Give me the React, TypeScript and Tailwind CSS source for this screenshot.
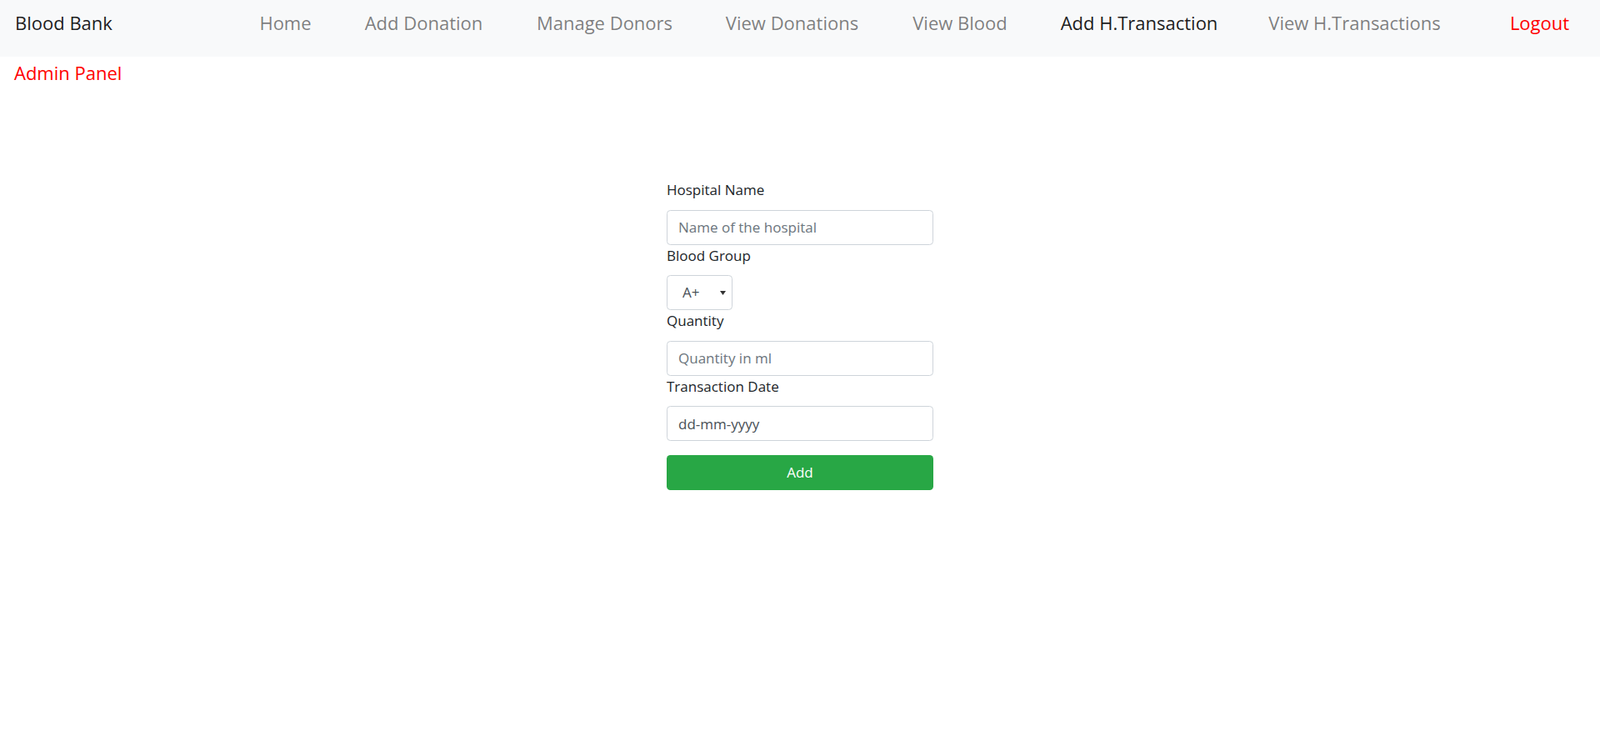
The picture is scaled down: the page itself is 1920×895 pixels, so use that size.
import React from "react";

const font = { fontFamily: '"Open Sans", "Noto Sans", "Liberation Sans", sans-serif' };

const links: { label: string; w: string; active?: boolean }[] = [
  { label: "Home", w: "w-[61px]" },
  { label: "Add Donation", w: "w-[143px]" },
  { label: "Manage Donors", w: "w-[163px]" },
  { label: "View Donations", w: "w-[159px]" },
  { label: "View Blood", w: "w-[116px]" },
  { label: "Add H.Transaction", w: "w-[186px]", active: true },
  { label: "View H.Transactions", w: "w-[203px]" },
];

function Label({ children }: { children: React.ReactNode }) {
  return (
    <label className="block text-[17px] leading-[26px] mb-[10.5px] text-[#212529]">{children}</label>
  );
}

export default function App() {
  return (
    <div className="min-h-[895px] bg-white" style={font}>
      <nav className="h-[68px] bg-[#f8f9fa] flex items-start pt-[10.5px] pl-[18px] pr-[37px]">
        <a className="text-[22px] leading-[32px] text-[rgba(0,0,0,0.9)] whitespace-nowrap w-[116px]">Blood Bank</a>
        <ul className="flex gap-[64px] ml-[178px]">
          {links.map((l) => (
            <li
              key={l.label}
              className={`${l.w} flex justify-center whitespace-nowrap text-[22px] leading-[32px] ${
                l.active ? "text-[rgba(0,0,0,0.9)]" : "text-[rgba(0,0,0,0.5)]"
              }`}
            >
              {l.label}
            </li>
          ))}
        </ul>
        <a className="ml-auto w-[71px] flex justify-center text-[22px] leading-[32px] text-[#ff0000]">Logout</a>
      </nav>

      <main className="px-[17px]">
        <h5 className="pt-[5.5px] text-[22px] leading-[26px] text-[#ff0000]">Admin Panel</h5>

        <form className="mx-auto w-[320px] mt-[115.7px]" onSubmit={(e) => e.preventDefault()}>
          <Label>Hospital Name</Label>
          <input
            type="text"
            placeholder="Name of the hospital"
            className="block w-full h-[42px] px-[13px] border border-[#ced4da] rounded-[4.4px] text-[17px] text-[#495057] placeholder:text-[#6c757d] outline-none"
          />

          <Label>Blood Group</Label>
          <div className="relative w-[79px] h-[42px]">
            <select
              defaultValue="A+"
              className="appearance-none w-full h-full pl-[18px] pr-[20px] border border-[#ced4da] rounded-[4.4px] bg-white text-[17px] text-[#495057] outline-none"
            >
              {["A+", "A-", "B+", "B-", "AB+", "AB-", "O+", "O-"].map((g) => (
                <option key={g}>{g}</option>
              ))}
            </select>
            <svg
              className="absolute left-[64px] top-[19px] pointer-events-none"
              width="7"
              height="5"
              viewBox="0 0 7 5"
            >
              <path d="M0 0 H7 L3.5 5 Z" fill="#333" />
            </svg>
          </div>

          <Label>Quantity</Label>
          <input
            type="text"
            placeholder="Quantity in ml"
            className="block w-full h-[42px] px-[13px] border border-[#ced4da] rounded-[4.4px] text-[17px] text-[#495057] placeholder:text-[#6c757d] outline-none"
          />

          <Label>Transaction Date</Label>
          <input
            type="text"
            placeholder="dd-mm-yyyy"
            className="block w-full h-[42px] px-[13px] border border-[#ced4da] rounded-[4.4px] text-[17px] text-[#495057] placeholder:text-[#495057] outline-none"
          />

          <button
            type="submit"
            className="mt-[16.8px] w-full h-[42px] rounded-[4.4px] bg-[#28a745] text-white text-[17px]"
          >
            Add
          </button>
        </form>
      </main>
    </div>
  );
}
